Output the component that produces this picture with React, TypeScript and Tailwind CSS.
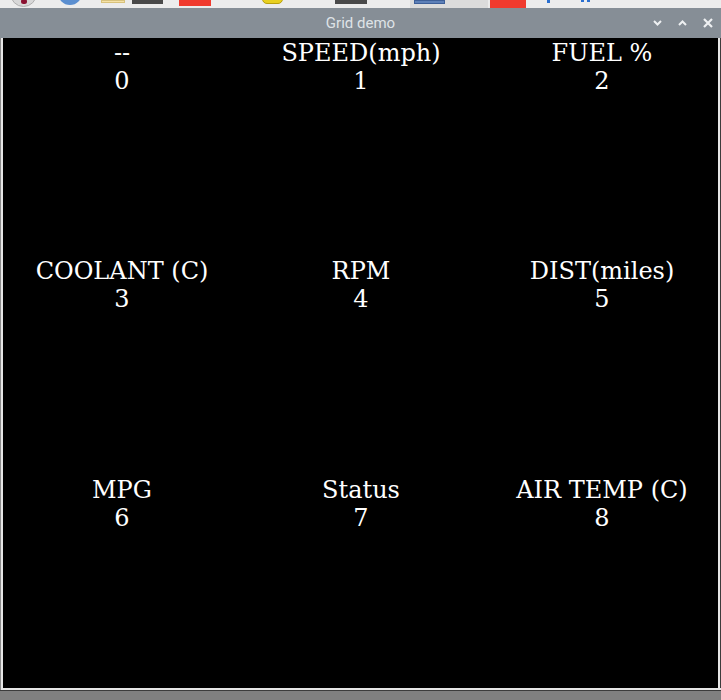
const cells = [
  { label: '--', value: '0' },
  { label: 'SPEED(mph)', value: '1' },
  { label: 'FUEL %', value: '2' },
  { label: 'COOLANT (C)', value: '3' },
  { label: 'RPM', value: '4' },
  { label: 'DIST(miles)', value: '5' },
  { label: 'MPG', value: '6' },
  { label: 'Status', value: '7' },
  { label: 'AIR TEMP (C)', value: '8' },
];

// only the bottom edge of the launcher icons shows above the window
function Taskbar() {
  return (
    <div className="h-[8px] bg-[#ececec] overflow-hidden flex items-start">
      <div className="ml-[10px] mt-[-20px] w-[27px] h-[27px] shrink-0 rounded-full bg-[#d8d8d8] border border-[#b0b0b0] flex items-end justify-center pb-[2px]">
        <div className="w-[6px] h-[5px] rounded-full bg-[#8a1030]" />
      </div>
      <div className="ml-[21px] mt-[-19px] w-[24px] h-[24px] shrink-0 rounded-full bg-[#5b8fd0]" />
      <div className="ml-[19px] w-[24px] h-[3px] shrink-0 bg-[#f5e2a8] border border-[#d8c27c]" />
      <div className="ml-[7px] w-[31px] h-[4px] shrink-0 bg-[#4a4a4a]" />
      <div className="ml-[16px] w-[32px] h-[6px] shrink-0 bg-[#f03a2e]" />
      <div className="ml-[51px] mt-[-6px] w-[21px] h-[10px] shrink-0 rounded-full bg-[#e8d020] border border-[#b8a010]" />
      <div className="ml-[52px] w-[32px] h-[4px] shrink-0 bg-[#4a4a4a]" />
      <div className="ml-[43px] w-[78px] h-[8px] shrink-0 bg-[#dcdcdc] pl-[4px]">
        <div className="w-[31px] h-[4px] bg-[#5d80b8] border border-[#3d5f98]" />
      </div>
      <div className="ml-[2px] w-[36px] h-[8px] shrink-0 bg-[#f03a2e]" />
      <div className="ml-[21px] w-[3px] h-[3px] shrink-0 bg-[#2a6fd0]" />
      <div className="ml-[31px] w-[3px] h-[2px] shrink-0 bg-[#2a6fd0]" />
      <div className="ml-[3px] w-[3px] h-[2px] shrink-0 bg-[#2a6fd0]" />
    </div>
  );
}

function TitleBar() {
  return (
    <div className="h-[30px] bg-[#868e96] grid grid-cols-[1fr_auto_1fr] items-center">
      <div />
      <span className="text-[15px] text-[#dfe3e7]" style={{ fontFamily: 'Roboto, "Noto Sans", sans-serif' }}>
        Grid demo
      </span>
      <div className="flex items-center justify-end gap-[16px] pr-[8px]">
        <svg width="9" height="6" viewBox="0 0 9 6">
          <path d="M1 1 L4.5 4.5 L8 1" stroke="#eef0f2" strokeWidth="2" fill="none" />
        </svg>
        <svg width="9" height="6" viewBox="0 0 9 6">
          <path d="M1 5 L4.5 1.5 L8 5" stroke="#eef0f2" strokeWidth="2" fill="none" />
        </svg>
        <svg width="10" height="10" viewBox="0 0 10 10">
          <path d="M1 1 L9 9 M9 1 L1 9" stroke="#eef0f2" strokeWidth="2.2" fill="none" />
        </svg>
      </div>
    </div>
  );
}

export default function App() {
  return (
    <div className="w-[721px] h-[700px] bg-[#808080] overflow-hidden">
      <Taskbar />
      <TitleBar />
      <div className="h-[650px] bg-black border-l border-l-[#8a8a8a] border-r border-r-[#3c3c3c] flex">
        <div className="flex-1 border-l-2 border-l-[#e6e6e6] border-r-2 border-r-[#e6e6e6] bg-black grid grid-cols-[238px_240px_1fr] grid-rows-[218px_219px_1fr]">
          {cells.map((c, i) => (
            <div
              key={c.value}
              className={`flex flex-col items-center pt-[1px] text-white text-[24px] leading-[28px] ${i % 3 === 2 ? 'pl-[5px]' : ''}`}
              style={{ fontFamily: '"DejaVu Serif", serif' }}
            >
              <span>{c.label}</span>
              <span>{c.value}</span>
            </div>
          ))}
        </div>
      </div>
      <div className="h-[2px] bg-[#e6e6e6] border-l border-l-[#8a8a8a]" />
      <div className="h-[1px] bg-[#3c3c3c]" />
    </div>
  );
}
